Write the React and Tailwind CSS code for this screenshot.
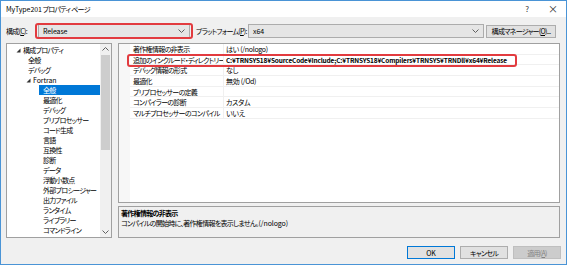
import React from 'react';

const treeItems = [
  { label: '構成プロパティ', level: 0, open: true },
  { label: '全般', level: 1 },
  { label: 'デバッグ', level: 1 },
  { label: 'Fortran', level: 1, open: true },
  { label: '全般', level: 2, selected: true },
  { label: '最適化', level: 2 },
  { label: 'デバッグ', level: 2 },
  { label: 'プリプロセッサー', level: 2 },
  { label: 'コード生成', level: 2 },
  { label: '言語', level: 2 },
  { label: '互換性', level: 2 },
  { label: '診断', level: 2 },
  { label: 'データ', level: 2 },
  { label: '浮動小数点', level: 2 },
  { label: '外部プロシージャー', level: 2 },
  { label: '出力ファイル', level: 2 },
  { label: 'ランタイム', level: 2 },
  { label: 'ライブラリー', level: 2 },
  { label: 'コマンドライン', level: 2 },
];

const props = [
  { name: '著作権情報の非表示', value: 'はい (/nologo)' },
  { name: '追加のインクルード・ディレクトリー', value: 'C:¥TRNSYS18¥SourceCode¥Include;C:¥TRNSYS18¥Compilers¥TRNSYS¥TRNDll¥x64¥Release', bold: true },
  { name: 'デバッグ情報の形式', value: 'なし' },
  { name: '最適化', value: '無効 (/Od)' },
  { name: 'プリプロセッサーの定義', value: '' },
  { name: 'コンパイラーの診断', value: 'カスタム' },
  { name: 'マルチプロセッサーのコンパイル', value: 'いいえ' },
];

function Triangle() {
  return (
    <svg width="5" height="5" viewBox="0 0 5 5" className="shrink-0">
      <path d="M4.5 0.5 L4.5 4.5 L0.5 4.5 Z" fill="#333" />
    </svg>
  );
}

function Chevron({ up = false, color = '#606060' }) {
  return (
    <svg width="7" height="4" viewBox="0 0 7 4">
      <path d={up ? 'M0.5 3.5 L3.5 0.5 L6.5 3.5' : 'M0.5 0.5 L3.5 3.5 L6.5 0.5'} fill="none" stroke={color} strokeWidth="1" />
    </svg>
  );
}

function Combo({ value, className }) {
  return (
    <div className={`h-[14px] flex items-center justify-between border border-[#acacac] bg-[#e5e5e5] pl-[4px] pr-[4px] ${className}`}>
      <span className="tracking-[-0.1px]">{value}</span>
      <Chevron />
    </div>
  );
}

export default function App() {
  return (
    <div className="w-[567px] h-[265px] border border-[#4a94d6] bg-[#f0f0f0] flex flex-col text-[7px] leading-[10px] tracking-[-0.7px] whitespace-nowrap text-black font-['Noto_Sans_CJK_JP',sans-serif] [font-feature-settings:'palt'] overflow-hidden">
      {/* title bar */}
      <div className="h-[16px] bg-white flex items-center justify-between pl-[5px] pr-[8px] shrink-0">
        <span><span className="tracking-[-0.1px]">MyType201</span> プロパティ ページ</span>
        <div className="flex items-center gap-[19px] text-[#333] tracking-normal">
          <span className="text-[8px]">?</span>
          <span className="text-[10px]">×</span>
        </div>
      </div>

      {/* configuration row */}
      <div className="relative flex items-center mt-[7px] pl-[5px] h-[14px] shrink-0">
        <span className="w-[32px]">構成(<span className="underline">C</span>):</span>
        <Combo value="Release" className="w-[152px]" />
        <span className="ml-[6px] w-[52px]">プラットフォーム(<span className="underline">P</span>):</span>
        <Combo value="x64" className="w-[236px]" />
        <div className="ml-[2px] w-[70px] h-[13px] border border-[#adadad] bg-[#e1e1e1] flex items-center justify-center">
          構成マネージャー(<span className="underline">O</span>)...
        </div>
        <div className="absolute left-[34px] top-[-1px] w-[158px] h-[16px] border-2 border-[#e23b3f] rounded-[3px]" />
      </div>

      {/* main */}
      <div className="flex mt-[5px] pl-[5px] gap-[6px] shrink-0">
        {/* tree */}
        <div className="w-[106px] h-[195px] border border-[#a0a0a0] bg-white flex">
          <div className="flex-1 pt-[1px] overflow-hidden">
            {treeItems.map((it, i) => (
              <div key={i} className="h-[10px] flex items-center">
                {it.level === 0 && (
                  <>
                    <span className="w-[9px]" />
                    <Triangle />
                    <span className="ml-[2px]">{it.label}</span>
                  </>
                )}
                {it.level === 1 && !it.open && <span className="pl-[21px]">{it.label}</span>}
                {it.level === 1 && it.open && (
                  <>
                    <span className="w-[19px]" />
                    <Triangle />
                    <span className="ml-[2px] tracking-[-0.1px]">{it.label}</span>
                  </>
                )}
                {it.level === 2 && (
                  <div className={`ml-[32px] flex-1 h-[10px] flex items-center pl-[4px] ${it.selected ? 'bg-[#0078d7] text-white' : ''}`}>
                    {it.label}
                  </div>
                )}
              </div>
            ))}
          </div>
          {/* scrollbar */}
          <div className="w-[11px] bg-[#f0f0f0] flex flex-col items-center">
            <div className="h-[10px] flex items-center justify-center"><Chevron up /></div>
            <div className="w-[9px] h-[95px] bg-[#cdcdcd] mt-[1px]" />
            <div className="flex-1" />
            <div className="h-[10px] flex items-center justify-center"><Chevron /></div>
          </div>
        </div>

        {/* right column */}
        <div className="w-[442px] flex flex-col gap-[3px]">
          <div className="relative h-[160px] border border-[#a0a0a0] bg-white flex">
            <div className="w-[11px] bg-[#f7f7f7]" />
            <div className="flex-1">
              {props.map((p, i) => (
                <div key={i} className="h-[10.7px] flex items-center border-b border-[#f0f0f0]">
                  <span className="w-[94px] pl-[3px] overflow-hidden border-r border-[#f0f0f0] h-full flex items-center">{p.name}</span>
                  <span className={`pl-[2px] ${p.bold ? 'font-bold text-[6.5px] tracking-[-0.15px]' : 'tracking-[-0.3px]'}`}>{p.value}</span>
                </div>
              ))}
            </div>
            <div className="absolute left-[8px] top-[10px] w-[390px] h-[13px] border-2 border-[#e23b3f] rounded-[3px]" />
          </div>
          <div className="h-[32px] border border-[#a0a0a0] bg-[#f0f0f0] pl-[2px] pt-[1px]">
            <div className="font-bold">著作権情報の非表示</div>
            <div>コンパイルの開始時に、著作権情報を表示しません。<span className="tracking-[-0.1px]">(/nologo)</span></div>
          </div>
        </div>
      </div>

      {/* buttons */}
      <div className="flex justify-end gap-[5px] mt-[8px] pr-[5px]">
        <div className="w-[48px] h-[13px] border border-[#0078d7] bg-[#e1e1e1] flex items-center justify-center tracking-normal">OK</div>
        <div className="w-[48px] h-[13px] border border-[#adadad] bg-[#e1e1e1] flex items-center justify-center">キャンセル</div>
        <div className="w-[48px] h-[13px] border border-[#bfbfbf] bg-[#cccccc] text-[#838383] flex items-center justify-center">
          適用(<span className="underline">A</span>)
        </div>
      </div>
    </div>
  );
}
